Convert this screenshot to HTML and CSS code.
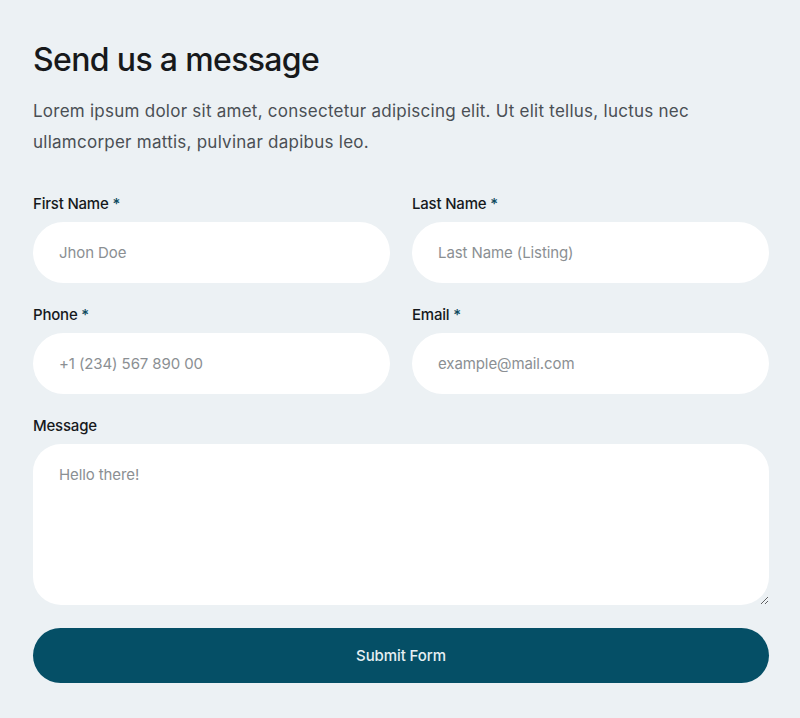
FILE: index.html
```html
<!DOCTYPE html>
<html lang="en">
<head>
<meta charset="utf-8">
<title>Send us a message</title>
<link rel="stylesheet" href="styles.css">
</head>
<body>
<main class="contact">
  <h1 class="contact__title">Send us a message</h1>
  <p class="contact__intro">Lorem ipsum dolor sit amet, consectetur adipiscing elit. Ut elit tellus, luctus nec ullamcorper mattis, pulvinar dapibus leo.</p>
  <form class="form">
    <div class="form__grid">
      <label class="field">
        <span class="field__label">First Name <span class="req">*</span></span>
        <input class="field__input" type="text" placeholder="Jhon Doe">
      </label>
      <label class="field">
        <span class="field__label">Last Name <span class="req">*</span></span>
        <input class="field__input" type="text" placeholder="Last Name (Listing)">
      </label>
      <label class="field">
        <span class="field__label">Phone <span class="req">*</span></span>
        <input class="field__input" type="tel" placeholder="+1 (234) 567 890 00">
      </label>
      <label class="field">
        <span class="field__label">Email <span class="req">*</span></span>
        <input class="field__input" type="email" placeholder="example@mail.com">
      </label>
      <label class="field field--wide">
        <span class="field__label">Message</span>
        <textarea class="field__textarea" placeholder="Hello there!"></textarea>
      </label>
    </div>
    <button class="form__submit" type="button">Submit Form</button>
  </form>
</main>
</body>
</html>
```
FILE: styles.css
```css
* { box-sizing: border-box; }
html, body { margin: 0; }
body {
  background: #ecf1f4;
  font-family: Inter, "Noto Sans", "Liberation Sans", sans-serif;
  color: #16191c;
  width: 800px;
  height: 718px;
  overflow: hidden;
}
.contact {
  padding: 40px 31px 0 33px;
}
.contact__title {
  margin: 0;
  font-size: 32px;
  line-height: 40px;
  font-weight: 500;
  letter-spacing: -0.65px;
  color: #17191b;
}
.contact__intro {
  margin: 16px 0 0;
  font-size: 17px;
  line-height: 31px;
  color: #4a4f54;
  letter-spacing: 0.25px;
  max-width: 700px;
}
.form {
  margin-top: 36px;
}
.form__grid {
  display: grid;
  grid-template-columns: 1fr 1fr;
  column-gap: 22px;
  row-gap: 22px;
}
.field {
  display: flex;
  flex-direction: column;
  gap: 8px;
}
.field--wide { grid-column: 1 / -1; }
.field__label {
  font-size: 15px;
  line-height: 20px;
  font-weight: 500;
  color: #16191c;
  letter-spacing: -0.2px;
}
.req { color: #0c4a5e; }
.field__input,
.field__textarea {
  font-family: inherit;
  font-size: 15px;
  color: #16191c;
  background: #fff;
  border: 0;
  outline: none;
  letter-spacing: -0.1px;
}
.field__input {
  height: 61px;
  border-radius: 31px;
  padding: 0 26px;
}
.field__textarea {
  height: 161px;
  border-radius: 28px;
  padding: 20px 26px;
  resize: vertical;
  line-height: 22px;
}
.field__input::placeholder,
.field__textarea::placeholder {
  color: #8b8f93;
  opacity: 1;
}
.form__submit {
  display: block;
  width: 100%;
  margin-top: 23px;
  height: 55px;
  border: 0;
  border-radius: 28px;
  background: #054f66;
  color: #e6f0f3;
  font-family: inherit;
  font-size: 15px;
  font-weight: 500;
  letter-spacing: -0.1px;
  cursor: pointer;
}
```
